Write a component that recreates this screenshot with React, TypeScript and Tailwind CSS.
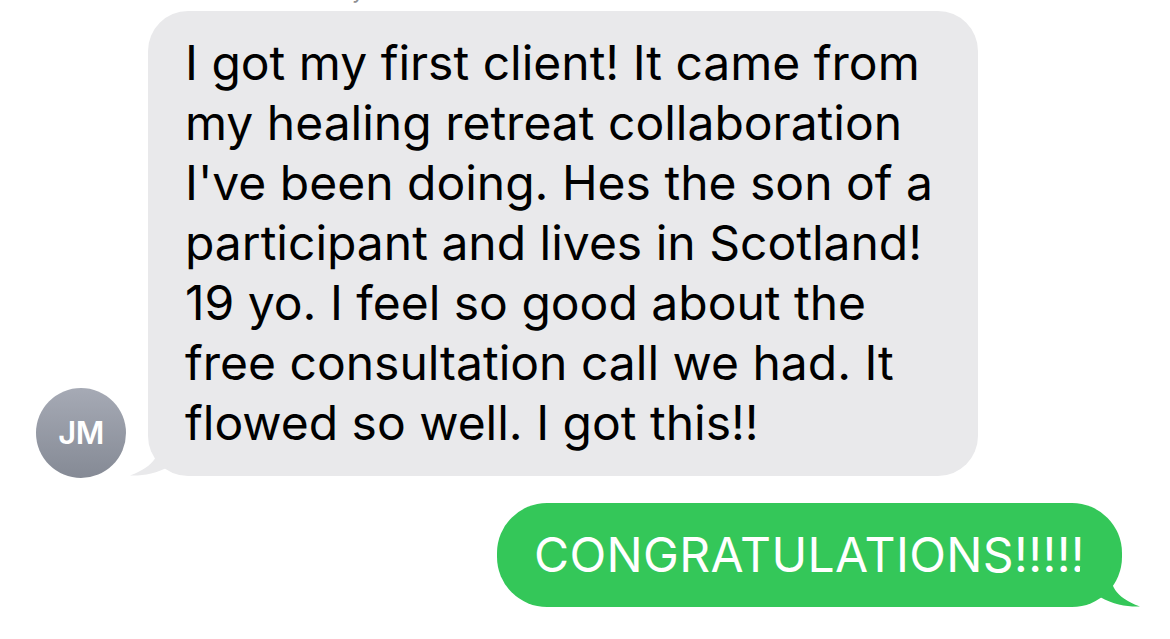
import React from "react";

const lines = [
  "I got my first client! It came from",
  "my healing retreat collaboration",
  "I've been doing. Hes the son of a",
  "participant and lives in Scotland!",
  "19 yo. I feel so good about the",
  "free consultation call we had. It",
  "flowed so well. I got this!!",
];

export default function App() {
  return (
    <div
      className="w-[1170px] h-[639px] bg-white overflow-hidden relative"
      style={{ fontFamily: "Inter, 'Liberation Sans', sans-serif" }}
    >
      <div className="flex flex-col">
        <div className="h-[11px] overflow-hidden relative">
          <div className="absolute left-[352px] top-[-22px] text-[22px] leading-[24px] text-[#8e8e93]">
            y
          </div>
        </div>
        <div className="flex items-end">
          <div className="w-[148px] flex justify-center pl-[14px] shrink-0">
            <div className="w-[90px] h-[90px] mb-[-2px] rounded-full bg-gradient-to-b from-[#a6aab5] to-[#858a95] flex items-center justify-center text-white text-[31px] font-semibold tracking-[-0.5px]">
              JM
            </div>
          </div>
          <div className="relative">
            <div className="bg-[#e9e9eb] rounded-[40px] w-[830px] h-[465px] pl-[37px] pt-[22px] text-black text-[48px] leading-[60px] tracking-[0px]">
              {lines.map((l, i) => (
                <div key={i} className="whitespace-nowrap">
                  {l}
                </div>
              ))}
            </div>
            <svg
              className="absolute left-[-18px] bottom-0"
              width="60"
              height="40"
              viewBox="0 0 60 40"
            >
              <path
                d="M30 0 C30 18 26 30 0 39.5 C12 40 26 38 40 30 L60 30 L60 0 Z"
                fill="#e9e9eb"
              />
            </svg>
          </div>
        </div>
        <div className="flex justify-end pr-[48px] mt-[27px]">
          <div className="relative">
            <div className="bg-[#34c759] rounded-[50px] h-[104px] w-[625px] flex items-center justify-center text-white text-[48px] tracking-[0.4px]">
              CONGRATULATIONS!!!!!
            </div>
            <svg
              className="absolute right-[-18px] bottom-0"
              width="60"
              height="40"
              viewBox="0 0 60 40"
            >
              <path
                d="M30 0 C30 18 34 30 60 39.5 C48 40 34 38 20 30 L0 30 L0 0 Z"
                fill="#34c759"
              />
            </svg>
          </div>
        </div>
      </div>
    </div>
  );
}
